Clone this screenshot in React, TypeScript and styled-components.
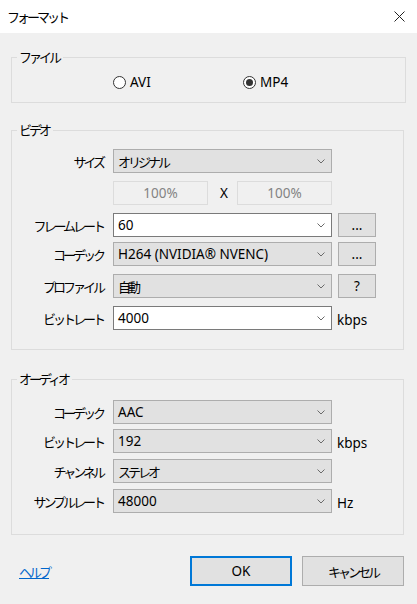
import * as React from "react";
import styled, { createGlobalStyle } from "styled-components";

const GlobalStyle = createGlobalStyle`
  html, body {
    margin: 0;
    padding: 0;
    background: #f0f0f0;
  }
  body {
    font-family: "Segoe UI", "Noto Sans", "Noto Sans CJK JP", sans-serif;
    font-size: 13.5px;
    color: #000;
  }
`;

const Window = styled.div`
  width: 417px;
  height: 604px;
  background: #f0f0f0;
  display: flex;
  flex-direction: column;
  overflow: hidden;
`;
const TitleBar = styled.div`
  height: 33px;
  background: #fff;
  display: flex;
  align-items: center;
  justify-content: space-between;
  padding: 0 12px 0 7px;
  box-sizing: border-box;
`;
const Jp = styled.span`
  font-family: "Noto Sans CJK JP", sans-serif;
  font-size: 13px;
  letter-spacing: -3px;
`;
const Body = styled.div`
  padding-left: 11px;
  display: flex;
  flex-direction: column;
`;
const Group = styled.fieldset<{ $w: number; $top: number; $pt: number; $pb: number }>`
  width: ${(p) => p.$w}px;
  box-sizing: border-box;
  margin: ${(p) => p.$top}px 0 0;
  padding: ${(p) => p.$pt}px 0 ${(p) => p.$pb}px 0;
  border: 1px solid #dcdcdc;
  min-width: 0;
`;
const Legend = styled.legend`
  margin-left: 5px;
  padding: 0 4px 0 2px;
  line-height: 16px;
  height: 16px;
`;
const RadioRow = styled.div`
  display: flex;
  align-items: center;
  height: 16px;
  padding-left: 101px;
`;
const RadioOption = styled.label`
  display: flex;
  align-items: center;
  width: 130px;
  gap: 4px;
`;
const RadioCircle = styled.span<{ $checked?: boolean }>`
  width: 13px;
  height: 13px;
  box-sizing: border-box;
  border: 1px solid #333;
  border-radius: 50%;
  background: #fff;
  display: flex;
  align-items: center;
  justify-content: center;
  &::after {
    content: "";
    width: 7px;
    height: 7px;
    border-radius: 50%;
    background: ${(p) => (p.$checked ? "#333" : "transparent")};
  }
`;
const Row = styled.div<{ $mt?: number }>`
  display: flex;
  align-items: center;
  height: 24px;
  margin-top: ${(p) => p.$mt ?? 0}px;
`;
const Label = styled.div`
  width: 91px;
  text-align: right;
  margin-right: 10px;
  white-space: nowrap;
`;
const Combo = styled.div<{ $editable?: boolean }>`
  width: 219px;
  height: 24px;
  box-sizing: border-box;
  border: 1px solid ${(p) => (p.$editable ? "#7a7a7a" : "#adadad")};
  background: ${(p) => (p.$editable ? "#fff" : "#e1e1e1")};
  display: flex;
  align-items: center;
  justify-content: space-between;
  padding: 0 6px 0 4px;
`;
const PercentBox = styled.div`
  width: 95px;
  height: 24px;
  box-sizing: border-box;
  border: 1px solid #dcdcdc;
  background: #f0f0f0;
  color: #838383;
  display: flex;
  align-items: center;
  justify-content: center;
`;
const Times = styled.div`
  width: 29px;
  text-align: center;
  padding-left: 3px;
  box-sizing: border-box;
`;
const SideButton = styled.div`
  width: 38px;
  height: 24px;
  box-sizing: border-box;
  margin-left: 6px;
  border: 1px solid #adadad;
  background: #e1e1e1;
  display: flex;
  align-items: center;
  justify-content: center;
`;
const Unit = styled.div`
  margin-left: 5px;
  padding-top: 3px;
`;
const Footer = styled.div`
  margin-top: 21px;
  height: 30px;
  display: flex;
  align-items: center;
  padding: 0 13px 0 19px;
  gap: 10px;
`;
const HelpLink = styled.a`
  color: #0066cc;
  text-decoration: underline;
  margin-right: auto;
  cursor: pointer;
`;
const DialogButton = styled.button<{ $default?: boolean }>`
  width: 102px;
  height: 30px;
  box-sizing: border-box;
  border: ${(p) => (p.$default ? "2px solid #0078d7" : "1px solid #adadad")};
  background: #e1e1e1;
  font: inherit;
  color: #000;
  padding: 0;
`;

const Chevron = () => (
  <svg width="8" height="5" viewBox="0 0 8 5">
    <path d="M0.5 0.5 L4 4 L7.5 0.5" fill="none" stroke="#6a6a6a" strokeWidth="1" />
  </svg>
);

const Close = () => (
  <svg width="11" height="11" viewBox="0 0 11 11">
    <path d="M0.5 0.5 L10.5 10.5 M10.5 0.5 L0.5 10.5" stroke="#222" strokeWidth="1" />
  </svg>
);

type SelectProps = { value: React.ReactNode; editable?: boolean };
const Select = ({ value, editable }: SelectProps) => (
  <Combo $editable={editable}>
    <span>{value}</span>
    <Chevron />
  </Combo>
);

const App = () => {
  return (
    <Window>
      <GlobalStyle />
      <TitleBar>
        <Jp>フォーマット</Jp>
        <Close />
      </TitleBar>
      <Body>
        <Group $w={395} $top={16} $pt={9} $pb={12}>
          <Legend>
            <Jp>ファイル</Jp>
          </Legend>
          <RadioRow>
            <RadioOption>
              <RadioCircle />
              AVI
            </RadioOption>
            <RadioOption>
              <RadioCircle $checked />
              MP4
            </RadioOption>
          </RadioRow>
        </Group>

        <Group $w={393} $top={19} $pt={11} $pb={19}>
          <Legend>
            <Jp>ビデオ</Jp>
          </Legend>
          <Row>
            <Label>
              <Jp>サイズ</Jp>
            </Label>
            <Select value={<Jp>オリジナル</Jp>} />
          </Row>
          <Row $mt={8}>
            <Label />
            <PercentBox>100%</PercentBox>
            <Times>X</Times>
            <PercentBox>100%</PercentBox>
          </Row>
          <Row $mt={8}>
            <Label>
              <Jp>フレームレート</Jp>
            </Label>
            <Select value="60" editable />
            <SideButton>...</SideButton>
          </Row>
          <Row $mt={5}>
            <Label>
              <Jp>コーデック</Jp>
            </Label>
            <Select value="H264 (NVIDIA® NVENC)" />
            <SideButton>...</SideButton>
          </Row>
          <Row $mt={8}>
            <Label>
              <Jp>プロファイル</Jp>
            </Label>
            <Select value={<Jp>自動</Jp>} />
            <SideButton>?</SideButton>
          </Row>
          <Row $mt={8}>
            <Label>
              <Jp>ビットレート</Jp>
            </Label>
            <Select value="4000" editable />
            <Unit>kbps</Unit>
          </Row>
        </Group>

        <Group $w={393} $top={21} $pt={13} $pb={21}>
          <Legend>
            <Jp>オーディオ</Jp>
          </Legend>
          <Row>
            <Label>
              <Jp>コーデック</Jp>
            </Label>
            <Select value="AAC" />
          </Row>
          <Row $mt={5}>
            <Label>
              <Jp>ビットレート</Jp>
            </Label>
            <Select value="192" />
            <Unit>kbps</Unit>
          </Row>
          <Row $mt={6}>
            <Label>
              <Jp>チャンネル</Jp>
            </Label>
            <Select value={<Jp>ステレオ</Jp>} />
          </Row>
          <Row $mt={6}>
            <Label>
              <Jp>サンプルレート</Jp>
            </Label>
            <Select value="48000" />
            <Unit>Hz</Unit>
          </Row>
        </Group>
      </Body>
      <Footer>
        <HelpLink>
          <Jp>ヘルプ</Jp>
        </HelpLink>
        <DialogButton $default>OK</DialogButton>
        <DialogButton>
          <Jp>キャンセル</Jp>
        </DialogButton>
      </Footer>
    </Window>
  );
};

export default App;
